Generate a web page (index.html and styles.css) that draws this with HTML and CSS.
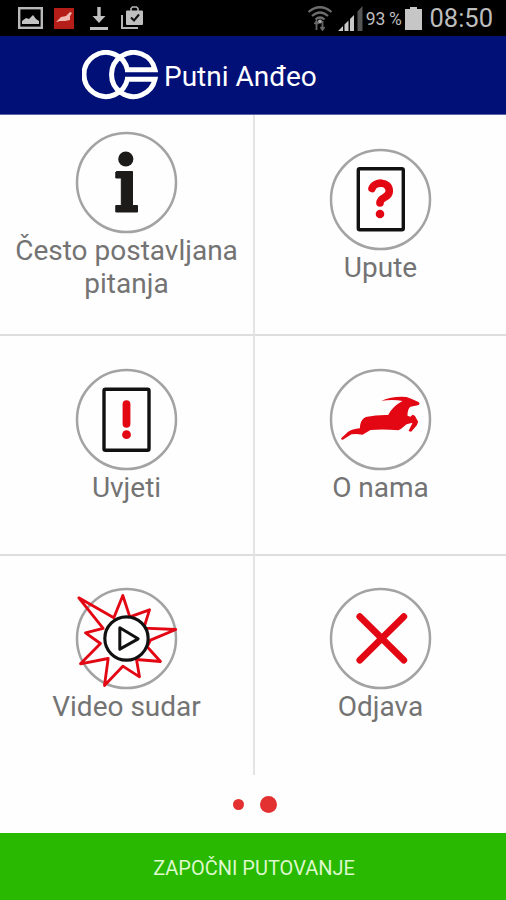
FILE: index.html
```html
<!DOCTYPE html>
<html lang="hr">
<head>
  <meta charset="UTF-8" />
  <meta name="viewport" content="width=device-width, initial-scale=1.0" />
  <title>Putni Anđeo</title>
  <link rel="stylesheet" href="styles.css">
</head>
<body>

  <!-- Status bar -->
  <div class="status-bar">
    <div class="status-left">
      <svg width="25" height="22" viewBox="0 0 25 22"><rect x="1.2" y="1.2" width="22.6" height="19.6" fill="none" stroke="#b9b9b9" stroke-width="2.4"/><path d="M4 17v-3l4-3 3 1 4-4 3 4 3 2v3z" fill="#c4c4c4"/></svg>
      <svg width="20" height="21" viewBox="0 0 20 21"><rect width="20" height="21" fill="#b51d18"/><path d="M2 14l5-5 5-1 4-4 2 1-2 3v4l-5 1-5 0z" fill="#f0b9b2"/></svg>
      <svg width="18" height="25" viewBox="0 0 18 25"><path d="M7.300 1h3.400v9h4.800L9 17 2.500 10h4.800zM0 21h18v3H0z" fill="#bfbfbf"/></svg>
      <svg width="23" height="24" viewBox="0 0 23 24"><path d="M1 9v13h16" fill="none" stroke="#b5b5b5" stroke-width="2"/><path d="M10 5V2.500l1.500-1.500h4L17 2.500V5" fill="none" stroke="#b5b5b5" stroke-width="1.600"/><rect x="5" y="4.500" width="17" height="14.500" rx="1" fill="#bfbfbf"/><path d="M10 11.500l3 3 5-6" fill="none" stroke="#111" stroke-width="2"/></svg>
    </div>
    <div class="status-right">
      <svg width="26" height="25" viewBox="0 0 26 25"><g fill="none" stroke="#6d6d6d" stroke-width="2.200"><path d="M1.500 6Q13-3.500 24.500 6"/><path d="M5 10Q13 3 21 10"/><path d="M8.500 13.500Q13 9.500 17.500 13.500"/></g><circle cx="13" cy="15.500" r="2" fill="#aaa"/><path d="M9.500 15v9M7.500 18l2-3 2 3M15.500 15v9M13.500 21l2 3 2-3" fill="none" stroke="#666" stroke-width="1.800"/></svg>
      <svg class="signal" width="25" height="25" viewBox="0 0 25 25"><path d="M0 25l5-5v5zM6.500 18.500l4-4V25h-4zM12 13l4-4v16h-4z" fill="#c8c8c8"/><path d="M19.500 5.500L24.500 0v25h-5z" fill="#555"/></svg>
      <span class="percent">93 %</span>
      <svg class="battery" width="17" height="23" viewBox="0 0 17 23"><path d="M5 0h7v2h5v21H0V2h5z" fill="#c6c6c6"/></svg>
      <span class="clock">08:50</span>
    </div>
  </div>

  <!-- Header -->
  <header class="header">
    <svg class="logo" width="76" height="50" viewBox="0 0 76 50">
      <g fill="none" stroke="#fff" stroke-width="5">
        <path d="M45.500 20A22 22 0 1 0 45.500 29"/>
        <path d="M43 19.700H73A22 22 0 1 0 73 29.300H43"/>
      </g>
    </svg>
    <h1>Putni Anđeo</h1>
  </header>

  <!-- Menu -->
  <main class="menu">
    <div class="item">
      <svg class="icon" viewBox="0 0 101 101">
        <circle class="ring" cx="50.500" cy="50.500" r="49.500"/>
        <circle cx="49.800" cy="27" r="7.600" fill="#1c1b1a"/>
        <path d="M40.500 39.500H56.500V73.500H61.500V80H39.800V73.500H45.300V46H39.800V40z" fill="#1c1b1a" stroke="#1c1b1a" stroke-linejoin="round"/>
      </svg>
      <p>Često postavljana pitanja</p>
    </div>

    <div class="item">
      <svg class="icon" viewBox="0 0 101 101">
        <circle class="ring" cx="50.500" cy="50.500" r="49.500"/>
        <rect class="sheet" x="28.300" y="19.800" width="45" height="61" rx="1.500"/>
        <path class="red-line" d="M42 39.500C44.500 32 59.300 32 59.300 42C59.300 49.500 50 47.500 50 54" stroke-width="7.600"/>
        <circle class="red" cx="50" cy="65" r="4.300"/>
      </svg>
      <p>Upute</p>
    </div>

    <div class="item">
      <svg class="icon" viewBox="0 0 101 101">
        <circle class="ring" cx="50.500" cy="50.500" r="49.500"/>
        <rect class="sheet" x="28" y="20.200" width="45" height="61" rx="1.500"/>
        <path class="red-line" d="M50.500 35.200V54.800" stroke-width="7.800"/>
        <circle class="red" cx="50.500" cy="65.700" r="4.400"/>
      </svg>
      <p>Uvjeti</p>
    </div>

    <div class="item">
      <svg class="icon" viewBox="0 0 101 101">
        <circle class="ring" cx="50.500" cy="50.500" r="49.500"/>
        <path class="red" transform="translate(.5 2) scale(.3333)" d="M32 202L52 183Q65 174 88 172Q88 146 106 138Q140 131 173 132Q186 106 216 90Q190 84 153 89Q185 75 228 78L242 83L264 93Q271 100 262 103L240 107Q231 113 231 134L240 137L246 131L253 134L263 152L259 163L242 182L234 180L243 162L246 155L228 160L212 173L204 178Q160 174 120 177L96 191L78 189L63 190L37 206Q31 207 32 202z"/>
      </svg>
      <p>O nama</p>
    </div>

    <div class="item">
      <svg class="icon" viewBox="0 0 101 101">
        <circle class="ring" cx="50.500" cy="50.500" r="49.500"/>
        <g transform="translate(-75.500 -28.500) scale(.3333)">
          <path class="red-line" d="M235 115L340 175L367 108L388 172L447 151L430 206L526 210L450 242L440 262L480 306L408 300L417 352L367 320L312 378L323 297L240 313L300 252L255 220L308 207z" stroke-width="8.500"/>
          <circle cx="378" cy="237" r="65" fill="#fff" stroke="#111" stroke-width="9.500"/>
          <path d="M358 205L413 238L358 269z" fill="none" stroke="#111" stroke-width="9" stroke-linejoin="round"/>
        </g>
      </svg>
      <p>Video sudar</p>
    </div>

    <div class="item">
      <svg class="icon" viewBox="0 0 101 101">
        <circle class="ring" cx="50.500" cy="50.500" r="49.500"/>
        <path class="red-line" d="M29.800 28.700L73.800 72.200M73.800 28.700L29.800 72.200" stroke-width="6.800"/>
      </svg>
      <p>Odjava</p>
    </div>
  </main>

  <!-- Page dots -->
  <div class="dots">
    <div class="dot"></div>
    <div class="dot active"></div>
  </div>

  <button class="start-btn">ZAPOČNI PUTOVANJE</button>

</body>
</html>
```
FILE: styles.css
```css
* {
  margin: 0;
  padding: 0;
  box-sizing: border-box;
}

body {
  background: #fefefe;
  font-family: Roboto, sans-serif;
  height: 100vh;
  overflow: hidden;
  display: flex;
  flex-direction: column;
}

/* Status bar */
.status-bar {
  height: 36px;
  background: #000;
  color: #bdbdbd;
  display: flex;
  justify-content: space-between;
  align-items: center;
  padding: 0 13px 0 18px;
}

.status-left {
  display: flex;
  align-items: center;
  gap: 13px;
}

.status-left svg:nth-child(2) {
  margin-right: 3px;
  margin-left: -2px;
}

.status-right {
  display: flex;
  align-items: center;
}

.signal {
  margin-left: 5px;
}

.percent {
  font-size: 17.5px;
  letter-spacing: -0.3px;
  margin-left: 3px;
  margin-top: 2px;
}

.battery {
  margin: 0 7px 0 4px;
}

.clock {
  font-size: 25.5px;
  line-height: 36px;
}

/* Header */
.header {
  height: 79px;
  background: #001077;
  border-bottom: 1px solid #5b66a8;
  color: #fff;
  display: flex;
  align-items: center;
  padding-left: 82px;
  gap: 6px;
}

.header h1 {
  font-size: 28px;
  font-weight: 400;
  padding-top: 2px;
}

/* Menu grid */
.menu {
  height: 660px;
  display: grid;
  grid-template-columns: 255px 1fr;
  grid-template-rows: 221px 220px 219px;
}

.item {
  display: flex;
  flex-direction: column;
  align-items: center;
  justify-content: center;
  padding-bottom: 17px;
  border-bottom: 2px solid #dedede;
}

.item:nth-child(odd) {
  border-right: 2px solid #e4e4e4;
}

.item:nth-last-child(-n+2) {
  border-bottom: none;
  padding-bottom: 20px;
}

.item p {
  color: #737373;
  font-size: 28px;
  line-height: 33px;
  text-align: center;
  padding-top: 1px;
}

.icon {
  width: 101px;
  height: 101px;
  flex-shrink: 0;
  overflow: visible;
}

.ring {
  fill: none;
  stroke: #a3a3a3;
  stroke-width: 2.5;
}

.sheet {
  fill: none;
  stroke: #111;
  stroke-width: 3.4;
}

.red {
  fill: #e30613;
}

.red-line {
  fill: none;
  stroke: #e30613;
  stroke-linecap: round;
  stroke-linejoin: round;
}

/* Dots */
.dots {
  height: 58px;
  display: flex;
  justify-content: center;
  align-items: center;
  gap: 16px;
  padding-left: 4px;
}

.dot {
  width: 11px;
  height: 11px;
  border-radius: 50%;
  background: #e33030;
}

.dot.active {
  width: 17px;
  height: 17px;
}

.start-btn {
  flex: 1;
  border: none;
  background: #28b900;
  color: #dcf8cc;
  font-family: inherit;
  font-size: 20px;
  padding: 2px 0 0 2px;
}
```
